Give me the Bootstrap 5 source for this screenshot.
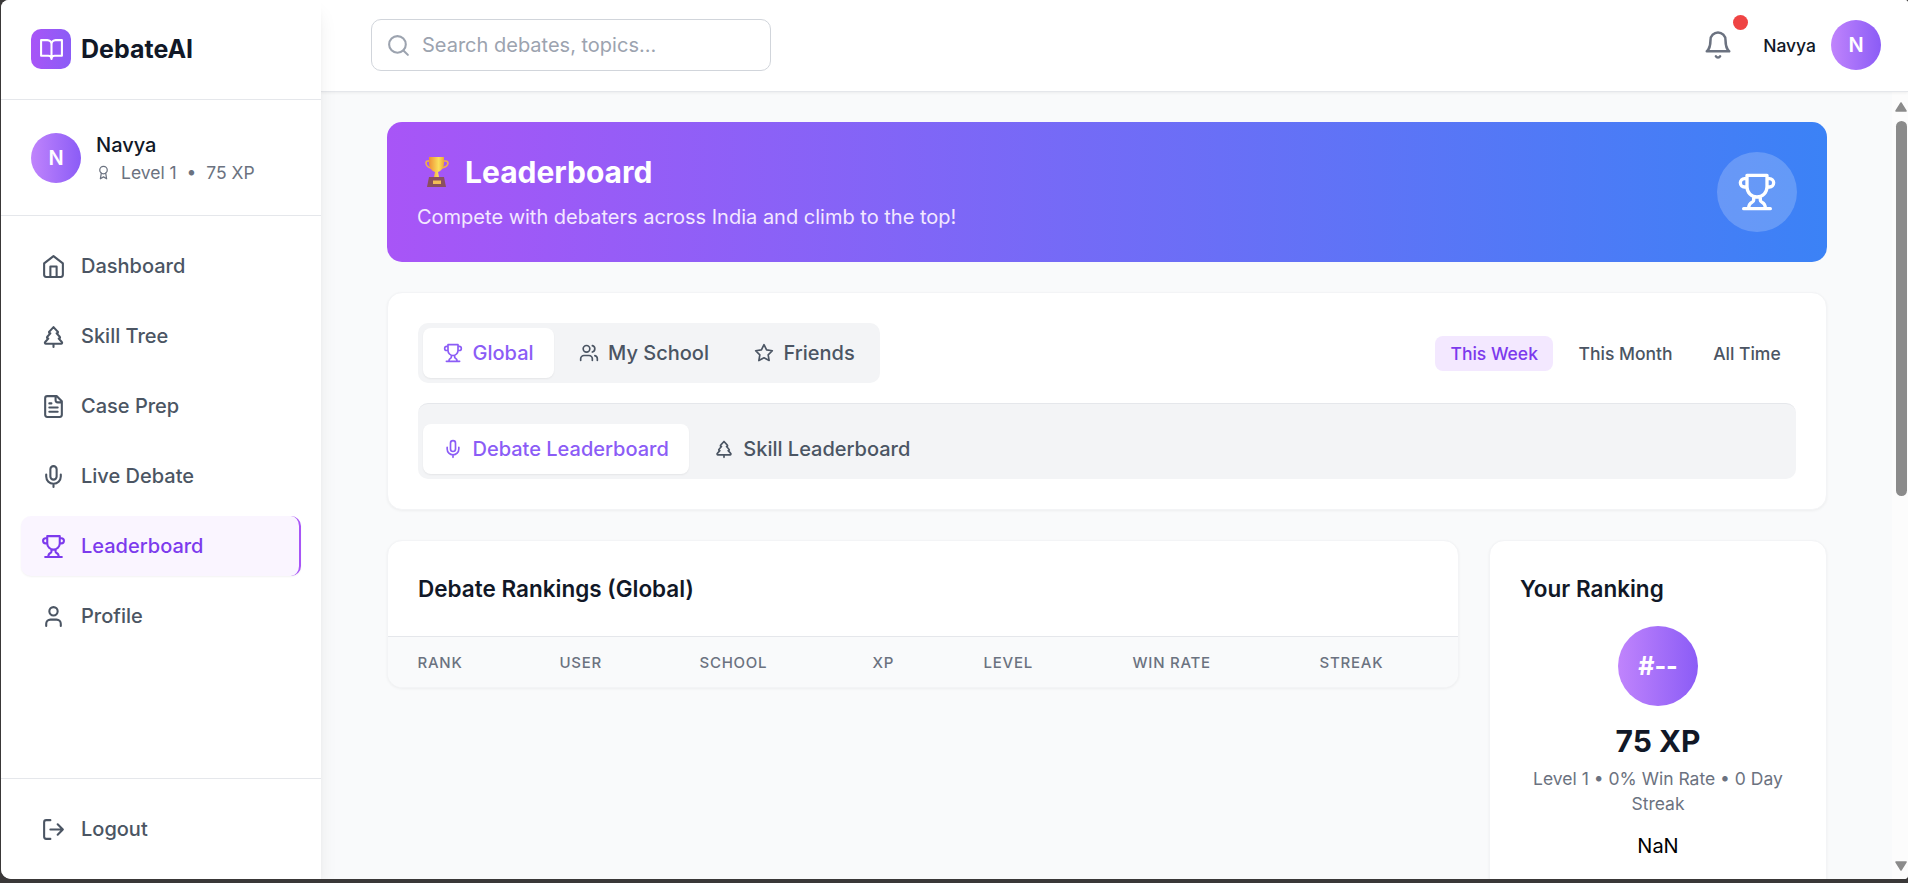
<!DOCTYPE html>
<html lang="en">
<head>
<meta charset="utf-8">
<title>DebateAI – Leaderboard</title>
<link href="https://cdn.jsdelivr.net/npm/bootstrap@5.3.0/dist/css/bootstrap.min.css" rel="stylesheet">
<style>
:root{--ink:#111827;--slate:#4b5563;--mute:#6b7280;--line:#e5e7eb}
html,body{height:100%}
body{background:#3a3838;font-family:Inter,"Liberation Sans",sans-serif;font-size:20px;line-height:30px;color:#000;overflow:hidden}
svg{display:block;flex:none;fill:none;stroke:currentColor;stroke-width:2;stroke-linecap:round;stroke-linejoin:round}
.i20{width:20px;height:20px}.i25{width:25px;height:25px}.i30{width:30px;height:30px}.i40{width:40px;height:40px}
.window{height:879px;margin-left:1px;border-radius:8px 3px 4px 10px;background:#f9fafb}
.side{width:320px;background:#fff;box-shadow:0 12px 19px -4px rgba(0,0,0,.1),0 5px 8px -5px rgba(0,0,0,.1);z-index:3}
.brand-row{height:100px;padding:0 30px 1px;gap:10px;border-bottom:1px solid var(--line)}
.brand-mark{width:40px;height:40px;border-radius:10px;color:#fff;background:linear-gradient(90deg,#a855f7,#8b5cf6)}
.brand-name{font-size:25px;font-weight:700;color:var(--ink)}
.who{height:116px;padding:0 30px;gap:15px;border-bottom:1px solid var(--line)}
.avatar{width:50px;height:50px;border-radius:50%;color:#fff;font-weight:600;background:linear-gradient(90deg,#c084fc,#8b5cf6)}
.who-name{font-weight:500;color:var(--ink)}
.who-meta{font-size:17.5px;line-height:25px;color:var(--mute);gap:10px}
.menu{padding:20px;gap:10px}
.menu-link{height:60px;padding:0 20px;gap:15px;border-radius:10px;color:var(--slate);font-weight:500;text-decoration:none}
.menu-link.on{background:#faf5ff;color:#7c3aed;border-right:2px solid #a855f7;box-shadow:0 1px 2px rgba(0,0,0,.05)}
.bye{height:101px;padding:20px;border-top:1px solid var(--line)}
.topbar{height:92px;padding:0 27px 1px 50px;background:#fff;border-bottom:1px solid var(--line);box-shadow:0 1px 3px rgba(0,0,0,.06);z-index:2;border-top-right-radius:3px}
.search{width:400px;height:52px;padding:0 14px;gap:11px;border:1px solid #d1d5db;border-radius:10px;color:#9ca3af}
.bell{margin-right:30px;color:var(--mute)}
.dot{position:absolute;width:15px;height:15px;right:-15px;top:-15px;border-radius:50%;background:#ef4444}
.top-name{font-size:17.5px;font-weight:500;color:var(--ink);margin-right:15px;padding-top:2px}
.page{padding:30px 65px 0 66px;gap:30px}
.hero{height:140px;padding:30px;border-radius:15px;color:#fff;background:linear-gradient(90deg,#a855f7,#3b82f6)}
.hero h1{font-size:30px;line-height:40px;font-weight:700;margin:0 0 10px;gap:9px}
.hero p{margin:0;color:#f3e8ff}
.hero-badge{width:80px;height:80px;border-radius:50%;background:rgba(255,255,255,.2)}
.panel{background:#fff;border:1px solid #f3f4f6;border-radius:15px;box-shadow:0 1px 3px rgba(0,0,0,.05)}
.filters{height:218px;padding:30px}
.tabs{background:#f3f4f6;border-radius:10px;padding:5px;gap:5px}
.tabs-2{border-top:1px solid var(--line);padding-top:20px;margin-top:20px}
.tab-btn{height:50px;padding:0 20px;gap:9.5px;border:0;border-radius:8px;background:none;color:var(--slate);font-weight:500}
.tab-btn.on{background:#fff;color:#8b5cf6;box-shadow:0 1px 2px rgba(0,0,0,.06)}
.range{gap:10px;padding-top:1px}
.range button{height:35px;padding:0 15.3px;border:0;border-radius:8px;background:none;font-size:17.5px;line-height:25px;font-weight:500;color:var(--slate)}
.range .on{background:#f3e8ff;color:#7c3aed}
.ranks{width:1072px;height:148px}
.ranks .h-card{padding:30px}
.h-card{font-size:22.5px;line-height:35px;font-weight:600;color:var(--ink);margin:0}
.ranks table{width:100%;table-layout:fixed;border-collapse:collapse}
.ranks th{height:51px;padding:1px 0 0 29.5px;background:#f9fafb;border-top:1px solid var(--line);font-size:15px;line-height:20px;font-weight:500;letter-spacing:.75px;text-transform:uppercase;color:var(--mute)}
.mine{width:338px;height:400px;padding:30px}
.mine-rank{width:80px;height:80px;border-radius:50%;margin:20px auto 15px;color:#fff;font-size:25px;font-weight:700;background:linear-gradient(90deg,#c084fc,#8b5cf6)}
.mine-xp{font-size:30px;line-height:40px;font-weight:700;color:var(--ink);margin-bottom:5px}
.mine-meta{font-size:17.5px;line-height:25px;color:var(--mute);margin-bottom:15px}
.rail{width:16px;background:#fcfcfc;padding:10px 1px 8px 3px;color:#8b8b8b}
.thumb{width:11px;height:375px;border-radius:6px;background:#8b8b8b;margin:9px 0 0 1px}
.rail svg{width:12px;height:10px;fill:currentColor;stroke-width:1.5}
</style>
</head>
<body>
<svg width="0" height="0" class="position-absolute" aria-hidden="true">
<defs>
<symbol id="trophy" viewBox="0 0 24 24"><path d="M6 9H4.500a2.500 2.500 0 0 1 0-5H6M18 9h1.500a2.500 2.500 0 0 0 0-5H18M4 22h16M10 14.660V17c0 .55-.47.98-.97 1.210C7.850 18.750 7 20.240 7 22M14 14.660V17c0 .55.47.98.97 1.210C16.150 18.750 17 20.240 17 22M18 2H6v7a6 6 0 0 0 12 0V2Z"/></symbol>
<symbol id="tree" viewBox="0 0 24 24"><path d="m17 14 3 3.300a1 1 0 0 1-.7 1.700H4.700a1 1 0 0 1-.7-1.700L7 14h-.3a1 1 0 0 1-.7-1.700L9 9h-.2A1 1 0 0 1 8 7.300L12 3l4 4.300a1 1 0 0 1-.8 1.700H15l3 3.300a1 1 0 0 1-.7 1.700H17ZM12 22v-3"/></symbol>
<symbol id="mic" viewBox="0 0 24 24"><path d="M12 2a3 3 0 0 0-3 3v7a3 3 0 0 0 6 0V5a3 3 0 0 0-3-3ZM19 10v2a7 7 0 0 1-14 0v-2M12 19v3"/></symbol>
</defs>
</svg>

<div class="window d-flex overflow-hidden">
  <aside class="side d-flex flex-column flex-shrink-0">
    <div class="brand-row d-flex align-items-center">
      <div class="brand-mark d-flex align-items-center justify-content-center"><svg class="i25" viewBox="0 0 24 24"><path d="M2 3h6a4 4 0 0 1 4 4v14a3 3 0 0 0-3-3H2zM22 3h-6a4 4 0 0 0-4 4v14a3 3 0 0 1 3-3h7z"/></svg></div>
      <span class="brand-name">DebateAI</span>
    </div>
    <div class="who d-flex align-items-center">
      <div class="avatar d-flex align-items-center justify-content-center">N</div>
      <div>
        <div class="who-name">Navya</div>
        <div class="who-meta d-flex align-items-center"><svg width="15" height="15" viewBox="0 0 24 24"><circle cx="12" cy="8" r="6"/><path d="M15.480 12.890 17 22l-5-3-5 3 1.520-9.110"/></svg><span>Level 1 &nbsp;•&nbsp; 75 XP</span></div>
      </div>
    </div>
    <nav class="menu d-flex flex-column flex-grow-1">
      <a class="menu-link d-flex align-items-center" href="#"><svg class="i25" viewBox="0 0 24 24"><path d="m3 9 9-7 9 7v11a2 2 0 0 1-2 2H5a2 2 0 0 1-2-2zM9 22V12h6v10"/></svg>Dashboard</a>
      <a class="menu-link d-flex align-items-center" href="#"><svg class="i25"><use href="#tree"/></svg>Skill Tree</a>
      <a class="menu-link d-flex align-items-center" href="#"><svg class="i25" viewBox="0 0 24 24"><path d="M15 2H6a2 2 0 0 0-2 2v16a2 2 0 0 0 2 2h12a2 2 0 0 0 2-2V7ZM14 2v4a2 2 0 0 0 2 2h4M10 9H8M16 13H8M16 17H8"/></svg>Case Prep</a>
      <a class="menu-link d-flex align-items-center" href="#"><svg class="i25"><use href="#mic"/></svg>Live Debate</a>
      <a class="menu-link on d-flex align-items-center" href="#"><svg class="i25"><use href="#trophy"/></svg>Leaderboard</a>
      <a class="menu-link d-flex align-items-center" href="#"><svg class="i25" viewBox="0 0 24 24"><path d="M19 21v-2a4 4 0 0 0-4-4H9a4 4 0 0 0-4 4v2"/><circle cx="12" cy="7" r="4"/></svg>Profile</a>
    </nav>
    <div class="bye">
      <a class="menu-link d-flex align-items-center" href="#"><svg class="i25" viewBox="0 0 24 24"><path d="M9 21H5a2 2 0 0 1-2-2V5a2 2 0 0 1 2-2h4M16 17l5-5-5-5M21 12H9"/></svg>Logout</a>
    </div>
  </aside>

  <div class="d-flex flex-column flex-grow-1">
    <header class="topbar d-flex align-items-center flex-shrink-0">
      <div class="search d-flex align-items-center me-auto"><svg class="i25" viewBox="0 0 24 24"><circle cx="11" cy="11" r="8"/><path d="m21 21-4.300-4.300"/></svg>Search debates, topics...</div>
      <div class="bell position-relative"><svg class="i30" viewBox="0 0 24 24"><path d="M6 8a6 6 0 0 1 12 0c0 7 3 9 3 9H3s3-2 3-9M10.300 21a1.940 1.940 0 0 0 3.400 0"/></svg><span class="dot"></span></div>
      <span class="top-name">Navya</span>
      <div class="avatar d-flex align-items-center justify-content-center">N</div>
    </header>

    <div class="d-flex flex-grow-1 overflow-hidden">
      <main class="page d-flex flex-column flex-grow-1">
        <section class="hero d-flex align-items-center justify-content-between flex-shrink-0">
          <div>
            <h1 class="d-flex align-items-center"><svg width="39" height="32" viewBox="0 0 39 32" stroke="none"><defs><linearGradient id="gold"><stop offset="0" stop-color="#ee8f35"/><stop offset=".65" stop-color="#fbe05c"/><stop offset="1" stop-color="#eda63a"/></linearGradient></defs><g stroke="none"><path d="M13 5h-2.500q-1.500 0-1.500 2.500Q9.500 11 14 12M26 5h2.500Q31 5 31 7.500 30 11 25 12" style="fill:none;stroke:#f0b04a;stroke-width:1.600"/><path d="M12 1h15v6c0 5-3 8-6 9l1.200 6h-5.400l1.200-6c-3-1-6-4-6-9Z" style="fill:url(#gold)"/><path d="M12 21h15l2 10H10Z" style="fill:#8b4f5e"/><path d="M16 24.500h8v3.500h-8z" style="fill:#f2bd55"/></g></svg>Leaderboard</h1>
            <p>Compete with debaters across India and climb to the top!</p>
          </div>
          <div class="hero-badge d-flex align-items-center justify-content-center"><svg class="i40"><use href="#trophy"/></svg></div>
        </section>

        <section class="panel filters flex-shrink-0">
          <div class="d-flex align-items-center justify-content-between">
            <div class="tabs d-flex">
              <button class="tab-btn on d-flex align-items-center"><svg class="i20"><use href="#trophy"/></svg>Global</button>
              <button class="tab-btn d-flex align-items-center"><svg class="i20" viewBox="0 0 24 24"><path d="M16 21v-2a4 4 0 0 0-4-4H6a4 4 0 0 0-4 4v2M22 21v-2a4 4 0 0 0-3-3.870M16 3.130a4 4 0 0 1 0 7.750"/><circle cx="9" cy="7" r="4"/></svg>My School</button>
              <button class="tab-btn d-flex align-items-center"><svg class="i20" viewBox="0 0 24 24"><path d="m12 2 3.090 6.260L22 9.270l-5 4.870 1.180 6.880L12 17.770l-6.180 3.250L7 14.140 2 9.270l6.910-1.010z"/></svg>Friends</button>
            </div>
            <div class="range d-flex"><button class="on">This Week</button><button>This Month</button><button>All Time</button></div>
          </div>
          <div class="tabs tabs-2 d-flex">
            <button class="tab-btn on d-flex align-items-center"><svg class="i20"><use href="#mic"/></svg>Debate Leaderboard</button>
            <button class="tab-btn d-flex align-items-center"><svg class="i20"><use href="#tree"/></svg>Skill Leaderboard</button>
          </div>
        </section>

        <div class="d-flex align-items-start justify-content-between">
          <section class="panel ranks overflow-hidden">
            <h2 class="h-card">Debate Rankings (Global)</h2>
            <table>
              <colgroup><col style="width:142px"><col style="width:140px"><col style="width:173px"><col style="width:111px"><col style="width:149px"><col style="width:187px"><col></colgroup>
              <thead><tr><th>Rank</th><th>User</th><th>School</th><th>XP</th><th>Level</th><th>Win Rate</th><th>Streak</th></tr></thead>
            </table>
          </section>
          <section class="panel mine text-center">
            <h2 class="h-card text-start">Your Ranking</h2>
            <div class="mine-rank d-flex align-items-center justify-content-center">#--</div>
            <div class="mine-xp">75 XP</div>
            <div class="mine-meta">Level 1 • 0% Win Rate • 0 Day Streak</div>
            <div>NaN</div>
          </section>
        </div>
      </main>
      <div class="rail d-flex flex-column flex-shrink-0">
        <svg viewBox="0 0 12 10"><path d="M6 1 11 9H1Z"/></svg>
        <div class="thumb"></div>
        <svg class="mt-auto" viewBox="0 0 12 10"><path d="M6 9 11 1H1Z"/></svg>
      </div>
    </div>
  </div>
</div>
<script src="https://cdn.jsdelivr.net/npm/bootstrap@5.3.0/dist/js/bootstrap.bundle.min.js"></script>
</body>
</html>
